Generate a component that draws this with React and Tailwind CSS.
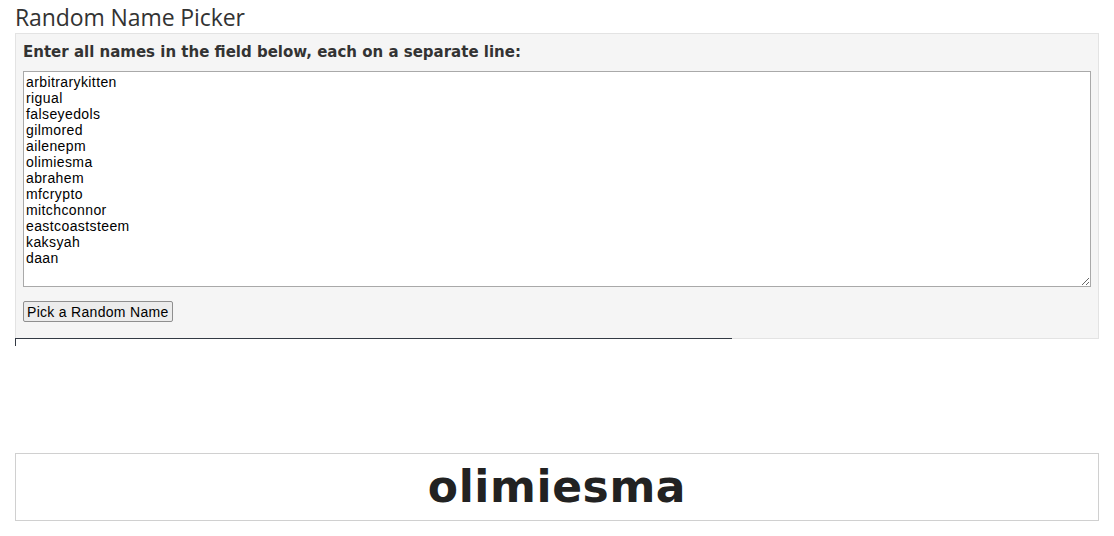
import React from 'react';

const names = [
  'arbitrarykitten',
  'rigual',
  'falseyedols',
  'gilmored',
  'ailenepm',
  'olimiesma',
  'abrahem',
  'mfcrypto',
  'mitchconnor',
  'eastcoaststeem',
  'kaksyah',
  'daan',
];

function App() {
  return (
    <div className="min-h-[536px] bg-white px-[15px] font-['Liberation_Sans',Arial,sans-serif]">
      {/* Title */}
      <h1 className="h-[33px] pt-[3px] text-[23px] leading-[28px] text-[#333] font-['Open_Sans',sans-serif] font-normal tracking-[-0.1px]">
        Random Name Picker
      </h1>

      {/* Input panel */}
      <div className="bg-[#f5f5f5] border border-[#e3e3e3] px-[7px] pt-[8px] pb-[14px]">
        <label className="block text-[15px] leading-[20px] font-bold text-[#333] mb-[9px] font-['DejaVu_Sans',Verdana,sans-serif]">
          Enter all names in the field below, each on a separate line:
        </label>
        <textarea
          defaultValue={names.join('\n')}
          className="block w-full h-[216px] bg-white border border-[#a9a9a9] p-[2px] text-[14px] leading-[16px] tracking-[0.4px] text-black font-['Liberation_Sans',Arial,sans-serif] outline-none"
        />
        <button className="mt-[14px] h-[21px] px-[3px] bg-[#ececec] border border-[#8f8f8f] rounded-[2px] text-[14px] leading-[16px] tracking-[0.3px] text-black font-['Liberation_Sans',Arial,sans-serif]">
          Pick a Random Name
        </button>
      </div>

      {/* Partial frame edge */}
      <div className="w-[717px] h-[8px] border-t border-l border-[#333a44] -mt-px"></div>

      {/* Result */}
      <div className="mt-[107px] h-[68px] border border-[#d0d0d0] flex items-center justify-center">
        <span className="text-[44px] leading-none font-bold text-[#222] tracking-[0.6px] font-['DejaVu_Sans',Verdana,sans-serif]">
          olimiesma
        </span>
      </div>
    </div>
  );
}

export default App;
